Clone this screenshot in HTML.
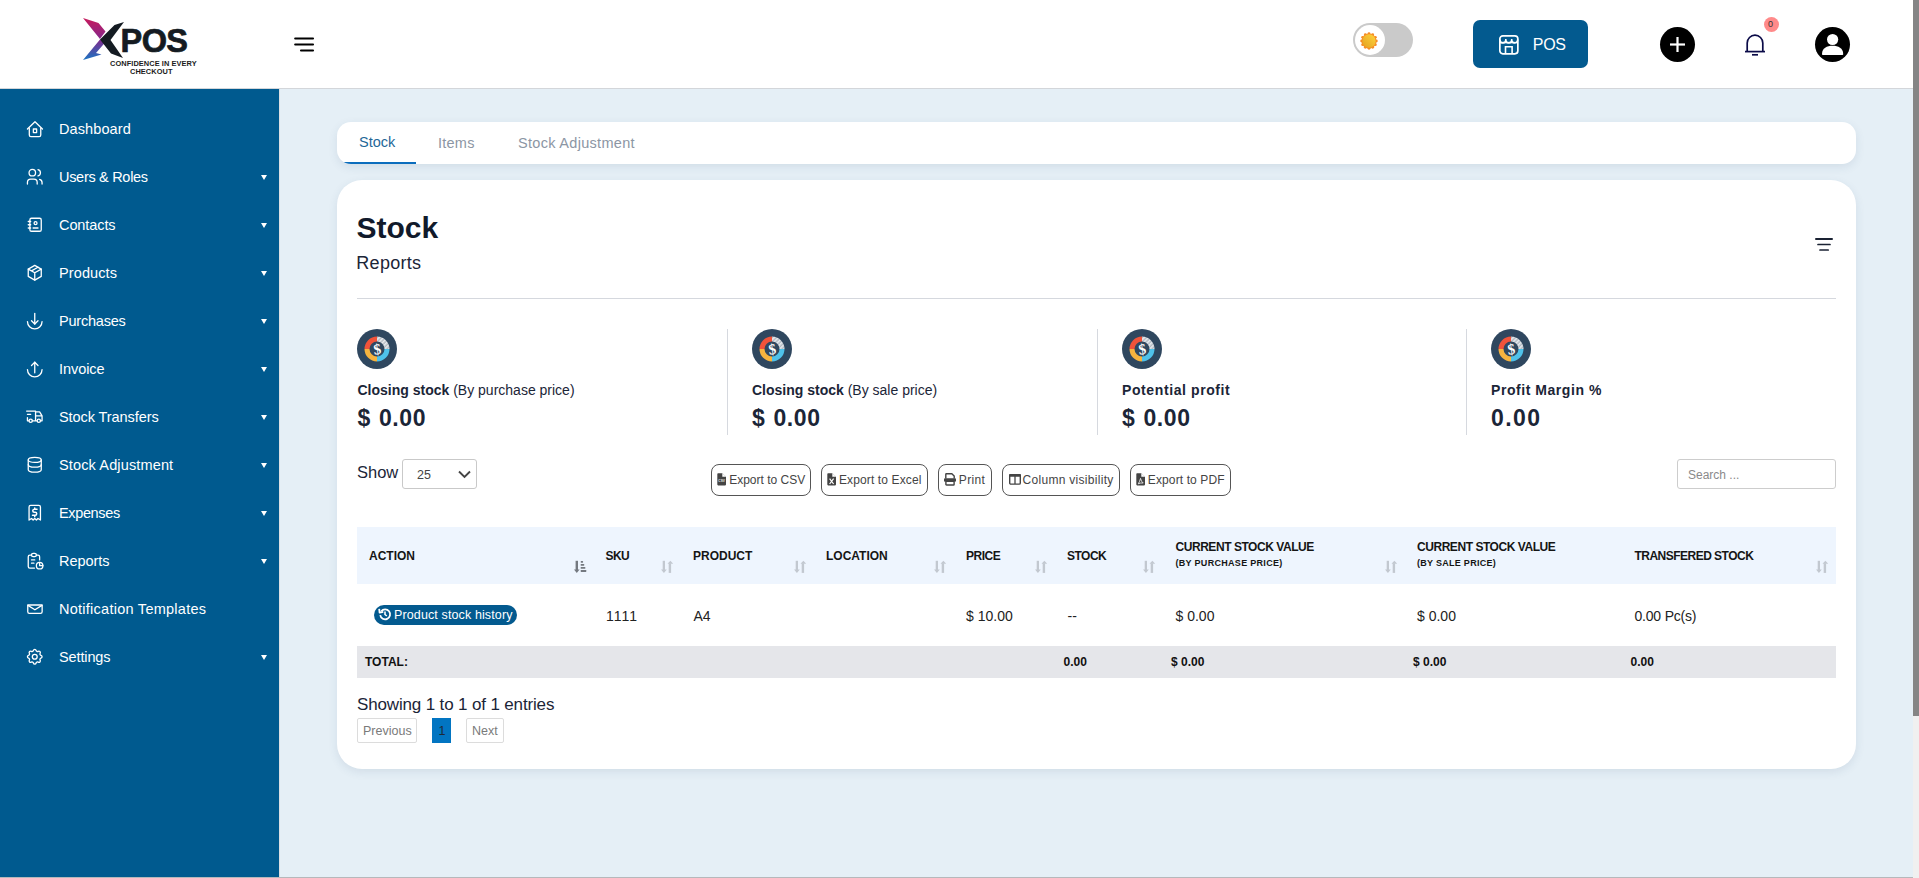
<!DOCTYPE html>
<html><head><meta charset="utf-8">
<style>
*{box-sizing:border-box;margin:0;padding:0}
html,body{width:1919px;height:878px;overflow:hidden}
body{position:relative;background:#e5eff6;font-family:"Liberation Sans",sans-serif;color:#1b2537}
.a{position:absolute;white-space:nowrap}
#hdr{position:absolute;left:0;top:0;width:1913px;height:89px;background:#fff;border-bottom:1px solid #d3d6da}
#sb{position:absolute;left:0;top:89px;width:279px;height:788px;background:#005a8f}
#sbl{position:absolute;left:279px;top:89px;width:1px;height:788px;background:#dcdfe3}
#scr{position:absolute;left:1913px;top:0;width:6px;height:878px;background:#f0f0f0}
#thumb{position:absolute;left:1913px;top:0;width:6px;height:716px;background:#858585}
#btm{position:absolute;left:0;top:877px;width:1913px;height:1px;background:#b5b8bb}
.mi{position:absolute;left:59px;font-size:14.5px;line-height:15px;color:#fff}
.ic{position:absolute;left:25px;width:19.5px;height:19.5px}
.car{position:absolute;left:261px;width:0;height:0;border-left:3px solid transparent;border-right:3px solid transparent;border-top:5px solid #fff}
.card{position:absolute;background:#fff;box-shadow:0 3px 10px rgba(40,70,110,.10)}
.tab{position:absolute;font-size:14.5px;line-height:15px}
.btn{position:absolute;top:464px;height:32px;border:1px solid #555;border-radius:8px;font-size:12px;color:#444}
.btn span{position:absolute;top:9px;line-height:12px}
.btn svg{position:absolute;top:8px}
.th{position:absolute;font-weight:bold;font-size:12px;line-height:12px;color:#151515}
.td{position:absolute;font-size:14px;line-height:14px;color:#222}
.tf{position:absolute;font-weight:bold;font-size:12px;line-height:12px;color:#111;top:656px}
.si{position:absolute;top:560px}
.lab{position:absolute;top:383px;font-size:14px;line-height:14px;color:#1b2537}
.val{position:absolute;top:407px;font-size:23px;line-height:23px;font-weight:bold;color:#1b2537;letter-spacing:0.6px;word-spacing:1px}
.vd{position:absolute;top:329px;width:1px;height:106px;background:#d6d9df}
.sic{position:absolute;top:329px;width:40px;height:40px}
</style></head><body>
<div id="hdr"></div>
<div id="sb"></div>
<div id="sbl"></div>
<div id="btm"></div>
<div id="scr"></div>
<div id="thumb"></div>

<!-- LOGO -->
<svg class="a" style="left:78px;top:14px" width="124" height="64" viewBox="78 14 124 64">
  <defs><linearGradient id="lg" gradientUnits="userSpaceOnUse" x1="0" y1="18" x2="0" y2="60">
    <stop offset="0" stop-color="#c81a5c"/><stop offset=".5" stop-color="#84288c"/><stop offset="1" stop-color="#1a74c2"/></linearGradient></defs>
  <polygon points="83,18 98.5,23 105.5,31.5 101,37.5 100,39" fill="url(#lg)"/>
  <polygon points="100,39.5 105.5,42 96,53 101.5,54.5 83,60" fill="url(#lg)"/>
  <polygon points="124,22 114.5,25 100,39.5 111,53.5 123,58 110.5,40" fill="#141b22"/>
  <text x="120.6" y="51.8" font-family="Liberation Sans" font-weight="bold" font-size="32.5" fill="#141b22" stroke="#141b22" stroke-width="0.7" letter-spacing="-0.6">POS</text>
  <text x="110" y="66.3" font-family="Liberation Sans" font-weight="bold" font-size="7.4" fill="#1b1b1b" letter-spacing="0.08">CONFIDENCE IN EVERY</text>
  <text x="130" y="74" font-family="Liberation Sans" font-weight="bold" font-size="7.4" fill="#1b1b1b" letter-spacing="0.08">CHECKOUT</text>
</svg>

<!-- hamburger -->
<svg class="a" style="left:290px;top:30px" width="30" height="30" viewBox="290 30 30 30" stroke="#000" stroke-width="2.1" stroke-linecap="round">
  <line x1="295.2" y1="38.5" x2="313" y2="38.5"/><line x1="295.2" y1="44.5" x2="313" y2="44.5"/><line x1="301" y1="50.5" x2="313" y2="50.5"/>
</svg>

<!-- toggle -->
<div class="a" style="left:1353px;top:23px;width:60px;height:34px;border-radius:17px;background:#cacaca"></div>
<div class="a" style="left:1355px;top:25px;width:30px;height:30px;border-radius:15px;background:#fff"></div>
<svg class="a" style="left:1358px;top:30px" width="22" height="22" viewBox="-11 -11 22 22">
  <defs><linearGradient id="sun" x1="1" y1="0" x2="0" y2="1"><stop offset="0" stop-color="#ffd53d"/><stop offset="1" stop-color="#e3a020"/></linearGradient></defs>
  <g fill="#f68d25"><circle cx="7.30" cy="0.00" r="1.45"/><circle cx="6.32" cy="3.65" r="1.45"/><circle cx="3.65" cy="6.32" r="1.45"/><circle cx="0.00" cy="7.30" r="1.45"/><circle cx="-3.65" cy="6.32" r="1.45"/><circle cx="-6.32" cy="3.65" r="1.45"/><circle cx="-7.30" cy="0.00" r="1.45"/><circle cx="-6.32" cy="-3.65" r="1.45"/><circle cx="-3.65" cy="-6.32" r="1.45"/><circle cx="-0.00" cy="-7.30" r="1.45"/><circle cx="3.65" cy="-6.32" r="1.45"/><circle cx="6.32" cy="-3.65" r="1.45"/><circle cx="0" cy="0" r="7.5"/></g>
  <circle cx="0" cy="0" r="6.7" fill="url(#sun)"/>
</svg>

<!-- POS button -->
<div class="a" style="left:1473px;top:20px;width:115px;height:48px;border-radius:7px;background:#035a8f"></div>
<svg class="a" style="left:1499.2px;top:34.5px" width="20" height="20" viewBox="0 0 20 20" fill="none" stroke="#fff" stroke-width="1.7">
  <rect x="0.85" y="0.85" width="18" height="18" rx="3"/>
  <path d="M0.9 7.6 H18.8" stroke-width="1.4"/>
  <path d="M0.9 4.4 V4.9 A2.95 2.95 0 0 0 6.8 4.9 V3.9 M6.8 4.9 A2.95 2.95 0 0 0 12.7 4.9 V3.9 M12.7 4.9 A2.95 2.95 0 0 0 18.6 4.9 V4.4" stroke-width="1.6"/>
  <path d="M6.5 19 V11.8 H13.1 V19" stroke-width="1.6"/>
</svg>
<div class="a" style="left:1532.8px;top:37px;font-size:16px;line-height:16px;color:#fff;letter-spacing:-0.3px">POS</div>

<!-- plus -->
<div class="a" style="left:1660px;top:27px;width:35px;height:35px;border-radius:50%;background:#000"></div>
<svg class="a" style="left:1660px;top:27px" width="35" height="35" viewBox="0 0 35 35" stroke="#fff" stroke-width="2.2"><line x1="10" y1="17.5" x2="25" y2="17.5"/><line x1="17.5" y1="10" x2="17.5" y2="25"/></svg>

<!-- bell -->
<svg class="a" style="left:1740px;top:30px" width="30" height="30" viewBox="1740 30 30 30" fill="none" stroke="#0b0b48" stroke-width="1.7">
  <path d="M1747.2 51.5 V43 a7.8 7.8 0 0 1 15.6 0 V51.5"/>
  <line x1="1745" y1="51.6" x2="1765" y2="51.6"/>
  <line x1="1752" y1="54.8" x2="1758" y2="54.8"/>
</svg>
<div class="a" style="left:1764px;top:17px;width:15px;height:15px;border-radius:50%;background:#ff8a8a"></div>
<div class="a" style="left:1768px;top:20px;font-size:9px;line-height:9px;color:#333">0</div>

<!-- user -->
<div class="a" style="left:1815px;top:27px;width:35px;height:35px;border-radius:50%;background:#000"></div>
<svg class="a" style="left:1815px;top:27px" width="35" height="35" viewBox="0 0 35 35" fill="#fff">
  <circle cx="17.6" cy="12.5" r="5.6"/>
  <path d="M7 27.3 C7 21 12 18.8 17.6 18.8 C23.2 18.8 28.2 21 28.2 27.3 Q28.2 28 27.4 28 H7.8 Q7 28 7 27.3Z"/>
</svg>

<!-- SIDEBAR MENU -->
<svg class="ic" style="top:118.8px" viewBox="0 0 24 24" fill="none" stroke="#fff" stroke-width="1.6" stroke-linecap="round" stroke-linejoin="round"><path d="M3 12.3 L12.3 3.3 L21.5 12.3"/><path d="M5.3 11.3 V19.6 a2 2 0 0 0 2 2 H17.4 a2 2 0 0 0 2-2 V11.3"/><rect x="10.3" y="12.3" width="4" height="4.4"/></svg>
<div class="mi" style="top:121.5px;letter-spacing:0.1px">Dashboard</div>
<svg class="ic" style="top:166.8px" viewBox="0 0 24 24" fill="none" stroke="#fff" stroke-width="1.6" stroke-linecap="round" stroke-linejoin="round"><circle cx="9" cy="7" r="4"/><path d="M3 21v-2a4 4 0 0 1 4-4h4a4 4 0 0 1 4 4v2"/><path d="M16 3.13a4 4 0 0 1 0 7.75"/><path d="M21 21v-2a4 4 0 0 0-3-3.85"/></svg>
<div class="mi" style="top:169.5px;letter-spacing:-0.3px">Users &amp; Roles</div>
<div class="car" style="top:174.5px"></div>
<svg class="ic" style="top:214.8px" viewBox="0 0 24 24" fill="none" stroke="#fff" stroke-width="1.6" stroke-linecap="round" stroke-linejoin="round"><path d="M20 6v12a2 2 0 0 1-2 2h-10a2 2 0 0 1-2-2v-12a2 2 0 0 1 2-2h10a2 2 0 0 1 2 2z"/><path d="M10 16h6"/><circle cx="13" cy="10" r="1.8"/><path d="M4 8h3M4 12h3M4 16h3"/></svg>
<div class="mi" style="top:217.5px;letter-spacing:-0.09px">Contacts</div>
<div class="car" style="top:222.5px"></div>
<svg class="ic" style="top:262.8px" viewBox="0 0 24 24" fill="none" stroke="#fff" stroke-width="1.6" stroke-linecap="round" stroke-linejoin="round"><path d="M12 3l8 4.5v9l-8 4.5l-8-4.5v-9z"/><path d="M12 12l8-4.5M12 12v9M12 12l-8-4.5M16 5.25l-8 4.5"/></svg>
<div class="mi" style="top:265.5px;letter-spacing:0.11px">Products</div>
<div class="car" style="top:270.5px"></div>
<svg class="ic" style="top:310.8px" viewBox="0 0 24 24" fill="none" stroke="#fff" stroke-width="1.6" stroke-linecap="round" stroke-linejoin="round"><path d="M3 13a9 9 0 0 0 18 0"/><path d="M12 3v13"/><path d="M8 12l4 4l4-4"/></svg>
<div class="mi" style="top:313.5px;letter-spacing:-0.21px">Purchases</div>
<div class="car" style="top:318.5px"></div>
<svg class="ic" style="top:358.8px" viewBox="0 0 24 24" fill="none" stroke="#fff" stroke-width="1.6" stroke-linecap="round" stroke-linejoin="round"><path d="M3 13a9 9 0 0 0 18 0"/><path d="M12 17V4"/><path d="M8 8l4-4l4 4"/></svg>
<div class="mi" style="top:361.5px;letter-spacing:-0.06px">Invoice</div>
<div class="car" style="top:366.5px"></div>
<svg class="ic" style="top:406.8px" viewBox="0 0 24 24" fill="none" stroke="#fff" stroke-width="1.6" stroke-linecap="round" stroke-linejoin="round"><circle cx="7" cy="17" r="2"/><circle cx="17" cy="17" r="2"/><path d="M5 17h-2v-4m-1-8h11v12m-4 0h6m4 0h2v-6h-8m0-5h5l3 5"/><path d="M3 9h4"/></svg>
<div class="mi" style="top:409.5px;letter-spacing:-0.07px">Stock Transfers</div>
<div class="car" style="top:414.5px"></div>
<svg class="ic" style="top:454.8px" viewBox="0 0 24 24" fill="none" stroke="#fff" stroke-width="1.6" stroke-linecap="round" stroke-linejoin="round"><ellipse cx="12" cy="6" rx="8" ry="3"/><path d="M4 6v6a8 3 0 0 0 16 0v-6"/><path d="M4 12v6a8 3 0 0 0 16 0v-6"/></svg>
<div class="mi" style="top:457.5px;letter-spacing:0.14px">Stock Adjustment</div>
<div class="car" style="top:462.5px"></div>
<svg class="ic" style="top:502.8px" viewBox="0 0 24 24" fill="none" stroke="#fff" stroke-width="1.6" stroke-linecap="round" stroke-linejoin="round"><path d="M5 21v-16a2 2 0 0 1 2-2h10a2 2 0 0 1 2 2v16l-3-2l-2 2l-2-2l-2 2l-2-2l-3 2"/><path d="M14.8 7.7H11.4a1.85 1.85 0 0 0 0 3.7h1.2a1.85 1.85 0 0 1 0 3.7H9.2M12 15.1v1.7M12 7.7V6" stroke-width="1.8"/></svg>
<div class="mi" style="top:505.5px;letter-spacing:-0.36px">Expenses</div>
<div class="car" style="top:510.5px"></div>
<svg class="ic" style="top:550.8px" viewBox="0 0 24 24" fill="none" stroke="#fff" stroke-width="1.6" stroke-linecap="round" stroke-linejoin="round"><path d="M8 5h-2a2 2 0 0 0-2 2v12a2 2 0 0 0 2 2h5.7"/><path d="M18 14v4h4"/><path d="M18 11v-4a2 2 0 0 0-2-2h-2"/><rect x="8" y="3" width="6" height="4" rx="2"/><circle cx="18" cy="18" r="4"/><path d="M8 11h4M8 15h3"/></svg>
<div class="mi" style="top:553.5px;letter-spacing:-0.03px">Reports</div>
<div class="car" style="top:558.5px"></div>
<svg class="ic" style="top:598.8px" viewBox="0 0 24 24" fill="none" stroke="#fff" stroke-width="1.6" stroke-linecap="round" stroke-linejoin="round"><path d="M3.4 7.4H21.1V15.6a2 2 0 0 1-2 2H5.4a2 2 0 0 1-2-2Z"/><path d="M3.6 7.8L12.2 13.2L20.9 7.8"/></svg>
<div class="mi" style="top:601.5px;letter-spacing:0.26px">Notification Templates</div>
<svg class="ic" style="top:646.8px" viewBox="0 0 24 24" fill="none" stroke="#fff" stroke-width="1.6" stroke-linecap="round" stroke-linejoin="round"><path d="M10.325 4.317c.426-1.756 2.924-1.756 3.35 0a1.724 1.724 0 0 0 2.573 1.066c1.543-.94 3.31.826 2.37 2.37a1.724 1.724 0 0 0 1.065 2.572c1.756.426 1.756 2.924 0 3.35a1.724 1.724 0 0 0-1.066 2.573c.94 1.543-.826 3.31-2.37 2.37a1.724 1.724 0 0 0-2.572 1.065c-.426 1.756-2.924 1.756-3.35 0a1.724 1.724 0 0 0-2.573-1.066c-1.543.94-3.31-.826-2.37-2.37a1.724 1.724 0 0 0-1.065-2.572c-1.756-.426-1.756-2.924 0-3.35a1.724 1.724 0 0 0 1.066-2.573c-.94-1.543.826-3.31 2.37-2.37c1 .608 2.296.07 2.572-1.065z"/><circle cx="12" cy="12" r="3"/></svg>
<div class="mi" style="top:649.5px;letter-spacing:-0.12px">Settings</div>
<div class="car" style="top:654.5px"></div>

<!-- CONTENT -->
<!-- TABS CARD -->
<div class="card" style="left:337px;top:122px;width:1519px;height:42px;border-radius:14px;overflow:hidden">
  <div class="a" style="left:0;top:39.5px;width:79px;height:2.5px;background:#0b6dbd"></div>
</div>
<div class="tab a" style="left:359px;top:135px;color:#1f6898">Stock</div>
<div class="tab a" style="left:438px;top:136px;color:#8c96a4;letter-spacing:0.25px">Items</div>
<div class="tab a" style="left:518px;top:136px;color:#8c96a4;letter-spacing:0.3px">Stock Adjustment</div>

<!-- MAIN CARD -->
<div class="card" style="left:337px;top:180px;width:1519px;height:589px;border-radius:25px"></div>
<div class="a" style="left:356.5px;top:213px;font-size:30px;line-height:30px;font-weight:bold;color:#111a2b">Stock</div>
<div class="a" style="left:356.3px;top:254px;font-size:18px;line-height:18px;color:#1b2537;letter-spacing:0.3px">Reports</div>
<svg class="a" style="left:1810px;top:232px" width="28" height="24" viewBox="1810 232 28 24" stroke="#1a2233" stroke-linecap="round">
  <line x1="1816" y1="239" x2="1832" y2="239" stroke-width="2"/>
  <line x1="1818" y1="244.5" x2="1830" y2="244.5" stroke-width="1.7"/>
  <line x1="1820" y1="250" x2="1828.2" y2="250" stroke-width="1.7"/>
</svg>
<div class="a" style="left:357px;top:298px;width:1479px;height:1px;background:#d5d8de"></div>

<!-- STATS -->
<svg width="0" height="0" style="position:absolute">
 <defs>
  <pattern id="strp" width="3" height="3" patternUnits="userSpaceOnUse" patternTransform="rotate(45)">
   <rect width="3" height="3" fill="#b3bac2"/><rect width="1.5" height="3" fill="#e9edf1"/>
  </pattern>
  
 </defs>
</svg>
<svg class="sic" style="left:357px" viewBox="0 0 40 40">
   <circle cx="20" cy="20" r="20" fill="#2f475f"/>
   <path d="M20 10 A10 10 0 0 0 10 20" stroke="#f0533a" stroke-width="5" fill="none"/>
   <path d="M10 20 A10 10 0 0 0 20 30" stroke="#f6b43f" stroke-width="5" fill="none"/>
   <path d="M20 30 A10 10 0 0 0 30 20" stroke="#4fc2ea" stroke-width="5" fill="none"/>
   <path d="M30 20 A10 10 0 0 0 20 10" stroke="url(#strp)" stroke-width="5" fill="none"/>
   <text x="20.2" y="25.3" text-anchor="middle" font-family="Liberation Serif" font-weight="bold" font-size="15" fill="#fff" transform="rotate(-8 20 20)">$</text>
  </svg>
<svg class="sic" style="left:752px" viewBox="0 0 40 40">
   <circle cx="20" cy="20" r="20" fill="#2f475f"/>
   <path d="M20 10 A10 10 0 0 0 10 20" stroke="#f0533a" stroke-width="5" fill="none"/>
   <path d="M10 20 A10 10 0 0 0 20 30" stroke="#f6b43f" stroke-width="5" fill="none"/>
   <path d="M20 30 A10 10 0 0 0 30 20" stroke="#4fc2ea" stroke-width="5" fill="none"/>
   <path d="M30 20 A10 10 0 0 0 20 10" stroke="url(#strp)" stroke-width="5" fill="none"/>
   <text x="20.2" y="25.3" text-anchor="middle" font-family="Liberation Serif" font-weight="bold" font-size="15" fill="#fff" transform="rotate(-8 20 20)">$</text>
  </svg>
<svg class="sic" style="left:1122px" viewBox="0 0 40 40">
   <circle cx="20" cy="20" r="20" fill="#2f475f"/>
   <path d="M20 10 A10 10 0 0 0 10 20" stroke="#f0533a" stroke-width="5" fill="none"/>
   <path d="M10 20 A10 10 0 0 0 20 30" stroke="#f6b43f" stroke-width="5" fill="none"/>
   <path d="M20 30 A10 10 0 0 0 30 20" stroke="#4fc2ea" stroke-width="5" fill="none"/>
   <path d="M30 20 A10 10 0 0 0 20 10" stroke="url(#strp)" stroke-width="5" fill="none"/>
   <text x="20.2" y="25.3" text-anchor="middle" font-family="Liberation Serif" font-weight="bold" font-size="15" fill="#fff" transform="rotate(-8 20 20)">$</text>
  </svg>
<svg class="sic" style="left:1491px" viewBox="0 0 40 40">
   <circle cx="20" cy="20" r="20" fill="#2f475f"/>
   <path d="M20 10 A10 10 0 0 0 10 20" stroke="#f0533a" stroke-width="5" fill="none"/>
   <path d="M10 20 A10 10 0 0 0 20 30" stroke="#f6b43f" stroke-width="5" fill="none"/>
   <path d="M20 30 A10 10 0 0 0 30 20" stroke="#4fc2ea" stroke-width="5" fill="none"/>
   <path d="M30 20 A10 10 0 0 0 20 10" stroke="url(#strp)" stroke-width="5" fill="none"/>
   <text x="20.2" y="25.3" text-anchor="middle" font-family="Liberation Serif" font-weight="bold" font-size="15" fill="#fff" transform="rotate(-8 20 20)">$</text>
  </svg>
<div class="vd" style="left:727px"></div>
<div class="vd" style="left:1097px"></div>
<div class="vd" style="left:1466px"></div>
<div class="lab a" style="left:357.5px"><b>Closing stock</b> (By purchase price)</div>
<div class="lab a" style="left:752px"><b>Closing stock</b> (By sale price)</div>
<div class="lab a" style="left:1122px;letter-spacing:0.6px"><b>Potential profit</b></div>
<div class="lab a" style="left:1491px;letter-spacing:0.55px"><b>Profit Margin %</b></div>
<div class="val a" style="left:357.5px">$ 0.00</div>
<div class="val a" style="left:752px">$ 0.00</div>
<div class="val a" style="left:1122px">$ 0.00</div>
<div class="val a" style="left:1491px;letter-spacing:1.4px">0.00</div>
<!-- CONTROLS -->
<div class="a" style="left:357px;top:464px;font-size:16.5px;line-height:17px;color:#1b2537">Show</div>
<div class="a" style="left:402px;top:459px;width:75px;height:30px;border:1px solid #c9c9c9;border-radius:3px;background:#fff"></div>
<div class="a" style="left:417px;top:469px;font-size:12.5px;line-height:12.5px;color:#444">25</div>
<svg class="a" style="left:456px;top:468px" width="16" height="12" viewBox="456 468 16 12" fill="none" stroke="#444" stroke-width="1.9"><path d="M459 471.5 L464.5 477 L470 471.5"/></svg>

<div class="btn" style="left:711px;width:100px"><svg style="left:5px;top:8.1px" width="10" height="13" viewBox="0 0 10 13"><path d="M0.3 1 Q0.3 0.2 1.1 0.2 H5.4 L9 3.8 V11.6 Q9 12.4 8.2 12.4 H1.1 Q0.3 12.4 0.3 11.6Z" fill="#444"/><path d="M5.3 0 V3.7 H9.2 Z" fill="#fff"/><text x="4.65" y="9" text-anchor="middle" font-size="3.2" font-family="Liberation Sans" font-weight="bold" fill="#e8e8e8">CSV</text></svg><span style="left:17.2px">Export to CSV</span></div>
<div class="btn" style="left:821px;width:107px"><svg style="left:5px;top:8.1px" width="10" height="13" viewBox="0 0 10 13"><path d="M0.3 1 Q0.3 0.2 1.1 0.2 H5.4 L9 3.8 V11.6 Q9 12.4 8.2 12.4 H1.1 Q0.3 12.4 0.3 11.6Z" fill="#444"/><path d="M5.3 0 V3.7 H9.2 Z" fill="#fff"/><path d="M2.6 5.6 L6.6 11 M6.6 5.6 L2.6 11" stroke="#fff" stroke-width="1.2"/></svg><span style="left:17px;letter-spacing:0.12px">Export to Excel</span></div>
<div class="btn" style="left:938px;width:54px"><svg style="left:5px;top:8.1px" width="13" height="13" viewBox="0 0 13 13"><path d="M1.8 5.5 V1.2 Q1.8 0.7 2.3 0.7 H7.8 L10.2 3.1 V5.5" fill="none" stroke="#444" stroke-width="1.4"/><rect x="0" y="5.2" width="12" height="3.6" rx="1" fill="#444"/><rect x="1.9" y="8.4" width="8.2" height="3.6" rx="0.6" fill="#fff" stroke="#444" stroke-width="1.4"/></svg><span style="left:19.8px;letter-spacing:0.35px">Print</span></div>
<div class="btn" style="left:1002px;width:118px"><svg style="left:5.5px;top:9px" width="13" height="12" viewBox="0 0 13 12"><rect x="0.7" y="0.7" width="10.6" height="9.4" rx="1.2" fill="none" stroke="#444" stroke-width="1.4"/><rect x="0" y="0" width="12" height="2.7" rx="1" fill="#444"/><path d="M6 1 V10" stroke="#444" stroke-width="1.3"/></svg><span style="left:19.5px;letter-spacing:0.3px">Column visibility</span></div>
<div class="btn" style="left:1130px;width:101px"><svg style="left:5px;top:8.1px" width="10" height="13" viewBox="0 0 10 13"><path d="M0.3 1 Q0.3 0.2 1.1 0.2 H5.4 L9 3.8 V11.6 Q9 12.4 8.2 12.4 H1.1 Q0.3 12.4 0.3 11.6Z" fill="#444"/><path d="M5.3 0 V3.7 H9.2 Z" fill="#fff"/><path d="M2.3 10.8 Q3.8 8.5 4.5 5.4 Q5.2 8.7 7.2 10 Q4.6 9.6 2.3 10.8Z" fill="none" stroke="#fff" stroke-width="0.8"/></svg><span style="left:16.8px;letter-spacing:0.12px">Export to PDF</span></div>

<div class="a" style="left:1677px;top:459px;width:159px;height:30px;border:1px solid #cdcdcd;border-radius:3px;background:#fff"></div>
<div class="a" style="left:1688px;top:469px;font-size:12px;line-height:12px;color:#8a8a8a">Search ...</div>

<!-- TABLE -->
<div class="a" style="left:357px;top:527px;width:1479px;height:57px;background:#eef5fe"></div>
<div class="th" style="left:369px;top:550px">ACTION</div>
<div class="th" style="left:605.5px;top:550px;letter-spacing:-0.6px">SKU</div>
<div class="th" style="left:693px;top:550px">PRODUCT</div>
<div class="th" style="left:826px;top:550px">LOCATION</div>
<div class="th" style="left:966px;top:550px;letter-spacing:-0.5px">PRICE</div>
<div class="th" style="left:1067px;top:550px;letter-spacing:-0.5px">STOCK</div>
<div class="th" style="left:1175.5px;top:541px;letter-spacing:-0.45px">CURRENT STOCK VALUE</div>
<div class="th" style="left:1175.5px;top:559px;font-size:9px;line-height:9px;letter-spacing:0.3px">(BY PURCHASE PRICE)</div>
<div class="th" style="left:1417px;top:541px;letter-spacing:-0.45px">CURRENT STOCK VALUE</div>
<div class="th" style="left:1417px;top:559px;font-size:9px;line-height:9px;letter-spacing:0.28px">(BY SALE PRICE)</div>
<div class="th" style="left:1634.5px;top:550px;letter-spacing:-0.52px">TRANSFERED STOCK</div>
<svg class="si" style="left:661.0px" width="13" height="14" viewBox="0 0 13 14" fill="#c2c8d0"><rect x="1.7" y="0.8" width="2.3" height="9.5"/><path d="M0 9.5 H5.8 L2.9 12.9Z"/><rect x="7.7" y="3.3" width="2.4" height="9.6"/><path d="M6.5 3.7 H12.2 L9.35 0.8Z"/></svg>
<svg class="si" style="left:793.7px" width="13" height="14" viewBox="0 0 13 14" fill="#c2c8d0"><rect x="1.7" y="0.8" width="2.3" height="9.5"/><path d="M0 9.5 H5.8 L2.9 12.9Z"/><rect x="7.7" y="3.3" width="2.4" height="9.6"/><path d="M6.5 3.7 H12.2 L9.35 0.8Z"/></svg>
<svg class="si" style="left:933.7px" width="13" height="14" viewBox="0 0 13 14" fill="#c2c8d0"><rect x="1.7" y="0.8" width="2.3" height="9.5"/><path d="M0 9.5 H5.8 L2.9 12.9Z"/><rect x="7.7" y="3.3" width="2.4" height="9.6"/><path d="M6.5 3.7 H12.2 L9.35 0.8Z"/></svg>
<svg class="si" style="left:1034.7px" width="13" height="14" viewBox="0 0 13 14" fill="#c2c8d0"><rect x="1.7" y="0.8" width="2.3" height="9.5"/><path d="M0 9.5 H5.8 L2.9 12.9Z"/><rect x="7.7" y="3.3" width="2.4" height="9.6"/><path d="M6.5 3.7 H12.2 L9.35 0.8Z"/></svg>
<svg class="si" style="left:1142.7px" width="13" height="14" viewBox="0 0 13 14" fill="#c2c8d0"><rect x="1.7" y="0.8" width="2.3" height="9.5"/><path d="M0 9.5 H5.8 L2.9 12.9Z"/><rect x="7.7" y="3.3" width="2.4" height="9.6"/><path d="M6.5 3.7 H12.2 L9.35 0.8Z"/></svg>
<svg class="si" style="left:1384.7px" width="13" height="14" viewBox="0 0 13 14" fill="#c2c8d0"><rect x="1.7" y="0.8" width="2.3" height="9.5"/><path d="M0 9.5 H5.8 L2.9 12.9Z"/><rect x="7.7" y="3.3" width="2.4" height="9.6"/><path d="M6.5 3.7 H12.2 L9.35 0.8Z"/></svg>
<svg class="si" style="left:1815.7px" width="13" height="14" viewBox="0 0 13 14" fill="#c2c8d0"><rect x="1.7" y="0.8" width="2.3" height="9.5"/><path d="M0 9.5 H5.8 L2.9 12.9Z"/><rect x="7.7" y="3.3" width="2.4" height="9.6"/><path d="M6.5 3.7 H12.2 L9.35 0.8Z"/></svg>
<svg class="si" style="left:573.5px" width="13" height="14" viewBox="0 0 13 14" fill="#747980"><rect x="1.6" y="0.8" width="2.4" height="9.5"/><path d="M0 9.5 H5.6 L2.8 12.9Z"/><rect x="6.7" y="1.1" width="2.4" height="1.6" rx=".4"/><rect x="6.7" y="4.1" width="3.5" height="1.7" rx=".4"/><rect x="6.7" y="7.1" width="4.6" height="1.7" rx=".4"/><rect x="6.7" y="10.1" width="5.6" height="1.8" rx=".4"/></svg>
<div class="a" style="left:374px;top:605px;width:143px;height:20px;border-radius:10px;background:#035a8f"></div>
<svg class="a" style="left:377.5px;top:606.7px" width="14" height="14" viewBox="0 0 14 14" fill="none" stroke="#fff" stroke-width="1.8"><path d="M3.2 4.2 A5 5 0 1 1 2.2 8.2"/><path d="M1.2 1.8 L1.6 5.6 L5.3 4.9" stroke-linejoin="round"/><path d="M7 4.6 V7.5 L8.8 9" stroke-width="1.6"/></svg>
<div class="a" style="left:394px;top:609px;font-size:12.5px;line-height:12.5px;color:#fff;letter-spacing:0.12px">Product stock history</div>
<div class="td" style="left:606px;top:609px;letter-spacing:1px">1111</div>
<div class="td" style="left:693.5px;top:609px">A4</div>
<div class="td" style="left:966px;top:609px">$ 10.00</div>
<div class="td" style="left:1067.5px;top:609px">--</div>
<div class="td" style="left:1175.5px;top:609px">$ 0.00</div>
<div class="td" style="left:1417px;top:609px">$ 0.00</div>
<div class="td" style="left:1634.5px;top:609px;letter-spacing:-0.2px">0.00 Pc(s)</div>
<div class="a" style="left:357px;top:646px;width:1479px;height:32px;background:#e5e6ea"></div>
<div class="tf" style="left:365px">TOTAL:</div>
<div class="tf" style="left:1063.5px">0.00</div>
<div class="tf" style="left:1171px">$ 0.00</div>
<div class="tf" style="left:1413px">$ 0.00</div>
<div class="tf" style="left:1630.5px">0.00</div>
<div class="a" style="left:357px;top:696px;font-size:17px;line-height:17px;color:#1b2537;letter-spacing:-0.15px">Showing 1 to 1 of 1 entries</div>
<div class="a" style="left:357px;top:718px;width:60px;height:25px;border:1px solid #dcdcdc;border-radius:2px;background:#fff"></div>
<div class="a" style="left:363px;top:725px;font-size:12.5px;line-height:12.5px;color:#7a7a7a">Previous</div>
<div class="a" style="left:432px;top:718px;width:19px;height:25px;background:#0275c2"></div>
<div class="a" style="left:438.5px;top:725px;font-size:12.5px;line-height:12.5px;color:#1c2a38">1</div>
<div class="a" style="left:466px;top:718px;width:38px;height:25px;border:1px solid #dcdcdc;border-radius:2px;background:#fff"></div>
<div class="a" style="left:472px;top:725px;font-size:12.5px;line-height:12.5px;color:#7a7a7a">Next</div>
</body></html>
